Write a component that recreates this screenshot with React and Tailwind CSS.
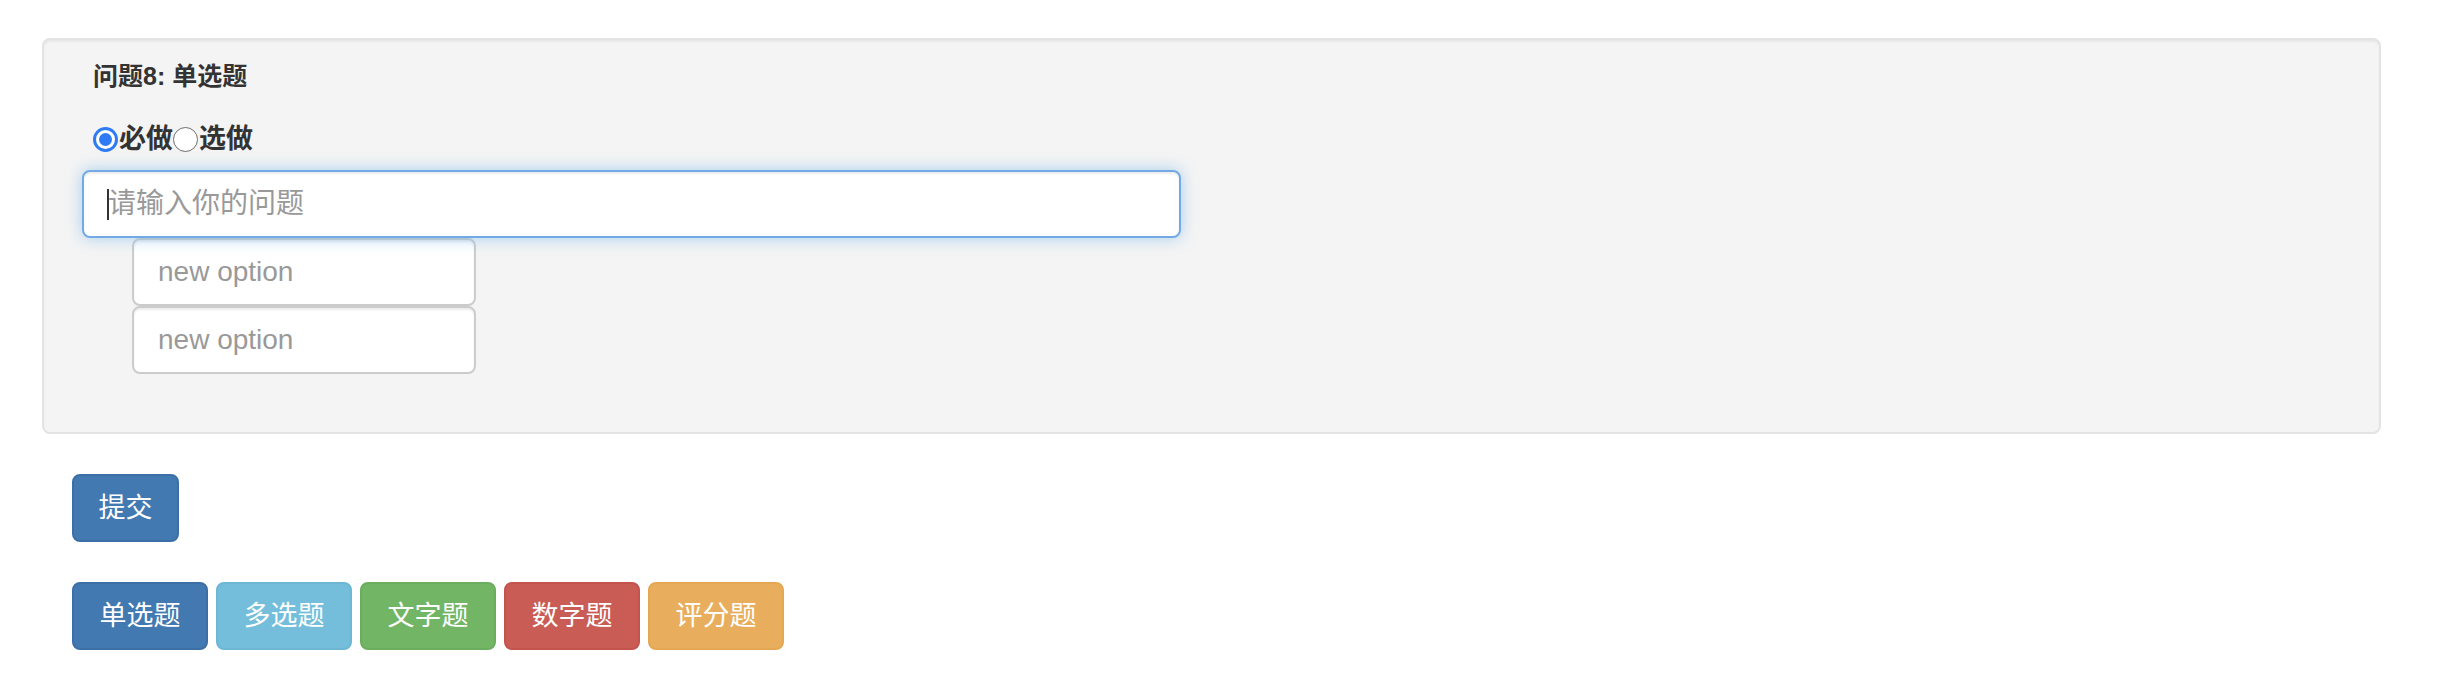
import React from "react";

const FONT = { fontFamily: '"Liberation Sans", "Noto Sans CJK SC", sans-serif' };

function Radio({ checked }) {
  if (checked) {
    return (
      <span className="w-[25px] h-[25px] rounded-full border-[3px] border-[#2f7bf6] bg-white flex items-center justify-center shrink-0">
        <span className="w-[13px] h-[13px] rounded-full bg-[#2f7bf6]" />
      </span>
    );
  }
  return <span className="w-[25px] h-[25px] rounded-full border-[1.5px] border-[#6f6f6f] bg-white shrink-0" />;
}

function Btn({ label, cls, w }) {
  return (
    <button
      type="button"
      className={`h-[68px] ${w} border-2 rounded-[8px] text-[27px] text-white flex items-center justify-center ${cls}`}
    >
      {label}
    </button>
  );
}

export default function App() {
  return (
    <div className="bg-white min-h-[686px] pt-[38px] pl-[42px] pr-[61px] text-[#333]" style={FONT}>
      <div className="border-2 border-[#e3e3e3] rounded-[8px] bg-[#f4f4f4] shadow-[inset_0_2px_2px_rgba(0,0,0,0.05)] pt-[20px] pb-[58px] px-[38px]">
        <div className="pl-[11px] text-[25px] leading-[32px] font-bold text-[#333]">问题8: 单选题</div>
        <div className="mt-[27px] h-[40px] flex items-center pl-[11px] text-[27px] font-bold text-[#333]">
          <Radio checked />
          <span className="ml-[1px]">必做</span>
          <Radio />
          <span className="ml-[1px]">选做</span>
        </div>
        <div className="relative mt-[11px] w-[1099px] h-[68px]">
          <input
            type="text"
            placeholder="请输入你的问题"
            className="w-full h-full rounded-[8px] border-2 border-[#72aae6] bg-white px-[24px] text-[28px] text-[#555] placeholder:text-[#999] outline-none shadow-[inset_0_2px_2px_rgba(0,0,0,0.075),0_0_16px_rgba(102,175,233,0.55)]"
            style={FONT}
          />
          <span className="absolute left-[25px] top-[19px] w-[2px] h-[31px] bg-[#333]" />
        </div>
        <div className="ml-[50px] flex flex-col w-[344px]">
          <input
            type="text"
            placeholder="new option"
            className="w-full h-[68px] rounded-[8px] border-2 border-[#cccccc] bg-white px-[24px] text-[28px] text-[#555] placeholder:text-[#999] outline-none shadow-[inset_0_2px_2px_rgba(0,0,0,0.075)]"
            style={FONT}
          />
          <input
            type="text"
            placeholder="new option"
            className="w-full h-[68px] rounded-[8px] border-2 border-[#cccccc] bg-white px-[24px] text-[28px] text-[#555] placeholder:text-[#999] outline-none shadow-[inset_0_2px_2px_rgba(0,0,0,0.075)]"
            style={FONT}
          />
        </div>
      </div>

      <div className="mt-[40px] ml-[30px]">
        <Btn label="提交" w="w-[107px]" cls="bg-[#4379b1] border-[#3b6fa6]" />
      </div>

      <div className="mt-[40px] ml-[30px] flex gap-[8px]">
        <Btn label="单选题" w="w-[136px]" cls="bg-[#4379b1] border-[#3b6fa6]" />
        <Btn label="多选题" w="w-[136px]" cls="bg-[#74bedb] border-[#6bb7d5]" />
        <Btn label="文字题" w="w-[136px]" cls="bg-[#72b565] border-[#69ad5d]" />
        <Btn label="数字题" w="w-[136px]" cls="bg-[#c95c55] border-[#c4534c]" />
        <Btn label="评分题" w="w-[136px]" cls="bg-[#e8ae5d] border-[#e5a751]" />
      </div>
    </div>
  );
}
